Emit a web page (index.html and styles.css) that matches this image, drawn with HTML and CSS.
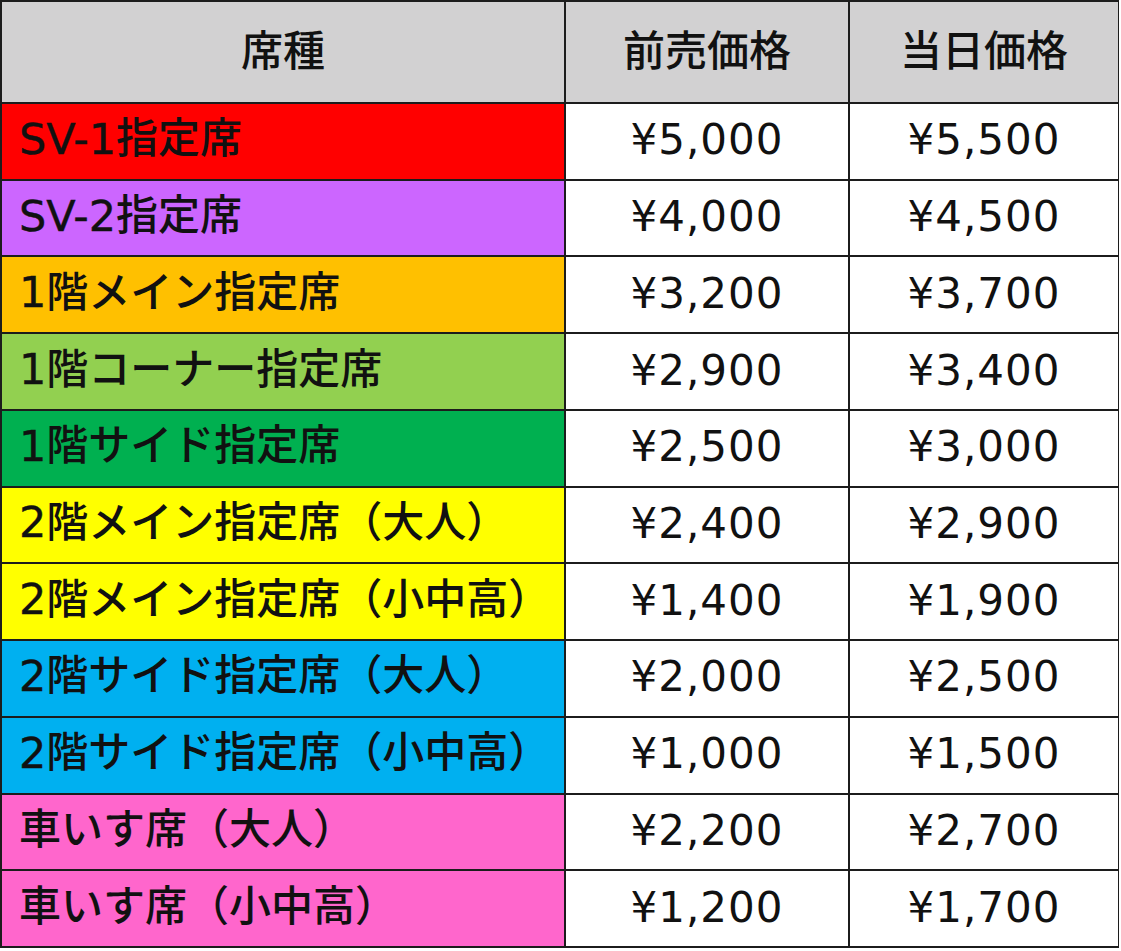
FILE: index.html
```html
<!DOCTYPE html>
<html lang="ja">
<head>
<meta charset="utf-8">
<title>料金表</title>
<link rel="stylesheet" href="styles.css">
</head>
<body>
<div class="price-table">
  <div class="cell head">席種</div>
  <div class="cell head">前売価格</div>
  <div class="cell head">当日価格</div>

  <div class="cell name red"><span class="lat">SV-1</span>指定席</div>
  <div class="cell price">¥5,000</div>
  <div class="cell price">¥5,500</div>

  <div class="cell name purple"><span class="lat">SV-2</span>指定席</div>
  <div class="cell price">¥4,000</div>
  <div class="cell price">¥4,500</div>

  <div class="cell name orange"><span class="lat">1</span>階メイン指定席</div>
  <div class="cell price">¥3,200</div>
  <div class="cell price">¥3,700</div>

  <div class="cell name lightgreen"><span class="lat">1</span>階コーナー指定席</div>
  <div class="cell price">¥2,900</div>
  <div class="cell price">¥3,400</div>

  <div class="cell name green"><span class="lat">1</span>階サイド指定席</div>
  <div class="cell price">¥2,500</div>
  <div class="cell price">¥3,000</div>

  <div class="cell name yellow"><span class="lat">2</span>階メイン指定席（大人）</div>
  <div class="cell price">¥2,400</div>
  <div class="cell price">¥2,900</div>

  <div class="cell name yellow"><span class="lat">2</span>階メイン指定席（小中高）</div>
  <div class="cell price">¥1,400</div>
  <div class="cell price">¥1,900</div>

  <div class="cell name blue"><span class="lat">2</span>階サイド指定席（大人）</div>
  <div class="cell price">¥2,000</div>
  <div class="cell price">¥2,500</div>

  <div class="cell name blue"><span class="lat">2</span>階サイド指定席（小中高）</div>
  <div class="cell price">¥1,000</div>
  <div class="cell price">¥1,500</div>

  <div class="cell name pink">車いす席（大人）</div>
  <div class="cell price">¥2,200</div>
  <div class="cell price">¥2,700</div>

  <div class="cell name pink">車いす席（小中高）</div>
  <div class="cell price">¥1,200</div>
  <div class="cell price">¥1,700</div>
</div>
</body>
</html>
```

FILE: styles.css
```css
html, body {
  margin: 0;
  padding: 0;
  background: #ffffff;
}

.price-table {
  box-sizing: border-box;
  width: 1119px;
  height: 948px;
  display: grid;
  grid-template-columns: 562px 282px 268px;
  grid-template-rows: 100px repeat(11, 1fr);
  gap: 2px;
  padding: 2px;
  background: #1c1c1c;
  color: #111111;
}

.cell {
  display: flex;
  align-items: center;
  background: #ffffff;
  white-space: nowrap;
  line-height: 1;
}

.head {
  background: #d2d1d2;
  justify-content: center;
  font-family: "Noto Sans CJK JP", sans-serif;
  font-size: 42px;
  font-weight: 500;
  padding-bottom: 8px;
}

.name {
  padding-left: 17px;
  padding-bottom: 4px;
  font-family: "DejaVu Sans", "Noto Sans CJK JP", sans-serif;
  font-size: 42px;
  font-weight: 500;
}

.lat {
  font-family: "DejaVu Sans", sans-serif;
  font-size: 43px;
  font-weight: 400;
  -webkit-text-stroke: 0.4px #111111;
}

.price {
  justify-content: center;
  font-family: "DejaVu Sans", sans-serif;
  font-size: 42px;
  letter-spacing: 1px;
  padding-bottom: 2px;
}

.red { background: #ff0000; }
.purple { background: #cc66ff; }
.orange { background: #ffc000; }
.lightgreen { background: #92d050; }
.green { background: #00b050; }
.yellow { background: #ffff00; }
.blue { background: #00b0f0; }
.pink { background: #ff66cc; }
```
